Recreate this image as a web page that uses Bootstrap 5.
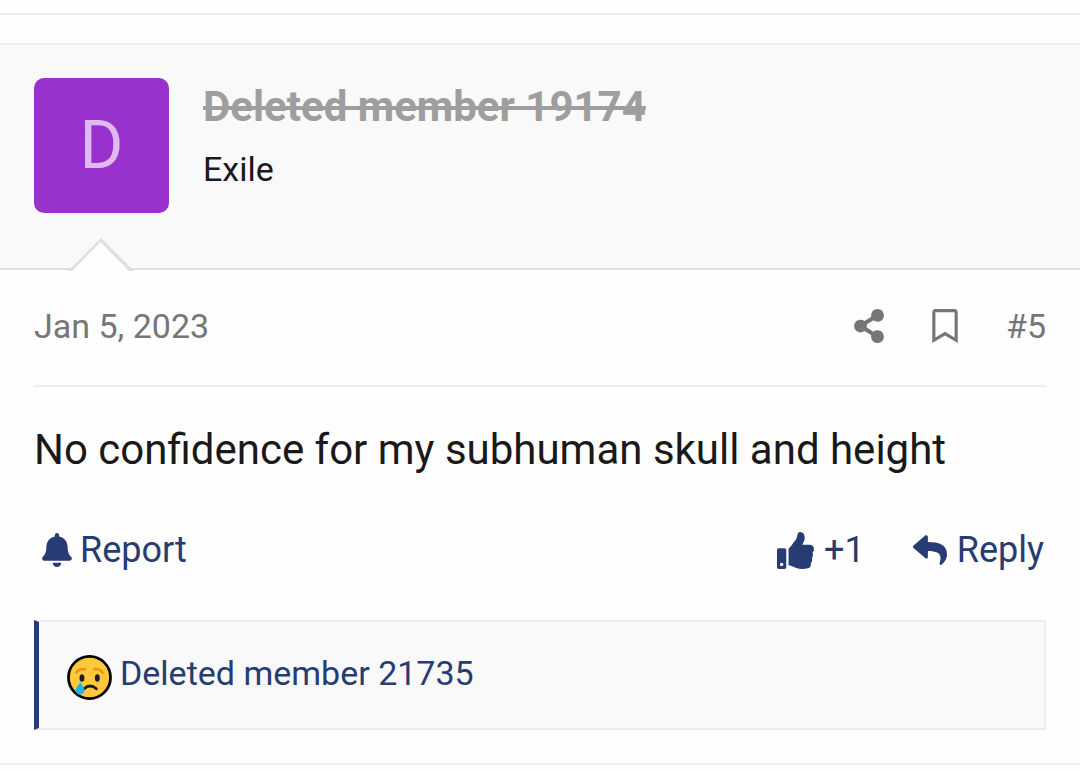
<!DOCTYPE html>
<html lang="en">
<head>
<meta charset="utf-8">
<meta name="viewport" content="width=device-width, initial-scale=1">
<title>Thread post #5</title>
<link href="https://cdn.jsdelivr.net/npm/bootstrap@5.3.0/dist/css/bootstrap.min.css" rel="stylesheet">
<style>
  body { font-family: Roboto, "Liberation Sans", sans-serif; font-size: 34px; line-height: 48px; color: #191919; background: #fefefe; }
  a { text-decoration: none; }
  svg { display: block; fill: currentColor; flex: none; }
  .prev-post { height: 15px; border-bottom: 2px solid #ededed; margin-bottom: 28px; }
  .post { border-top: 2px solid #ededed; border-bottom: 2px solid #ededed; }
  .post-user { position: relative; background: #f9f9f9; border-bottom: 2px solid #dfdfdf; padding: 33px 34px 55px; gap: 34px; }
  .avatar { width: 135px; height: 135px; border-radius: 10px; background: #9932cc; color: #e0b8f2; font-size: 67px; line-height: 1; }
  .user-arrow { position: absolute; left: 68px; bottom: -3px; }
  .user-name { font-size: 42px; line-height: 58px; font-weight: 700; color: #9e9e9e; text-decoration: line-through; }
  .user-title { margin-top: 9px; }
  .post-main { padding: 0 34px 33px; }
  .post-meta { height: 117px; padding-bottom: 4px; border-bottom: 2px solid #ededed; color: #767676; gap: 48px; }
  .post-meta a { color: inherit; }
  .post-text { font-size: 42px; line-height: 60px; margin: 33px 0 40px; }
  .post-actions { font-size: 36px; line-height: 60px; margin-bottom: 40px; padding: 0 2px 0 8px; }
  .post-actions a, .reactions a { color: #263c72; }
  .action { gap: 10px; }
  .reactions { background: #f9f9f9; border: 2px solid #ededed; border-left: 5px solid #263c72; padding: 27px 28px 28px; gap: 8px; }
  .reaction-icon { margin-top: 6px; }
</style>
</head>
<body>
<div class="prev-post"></div>
<article class="post">
  <header class="post-user d-flex">
    <a href="#" class="avatar d-flex align-items-center justify-content-center flex-shrink-0">D</a>
    <div>
      <a href="#" class="user-name d-block">Deleted member 19174</a>
      <div class="user-title">Exile</div>
    </div>
    <svg class="user-arrow" width="66" height="33" viewBox="0 0 66 33"><path fill="#dfdfdf" d="M0 33 33 0 66 33z"/><path fill="#fefefe" d="M4 33 32.500 4 61 33z"/></svg>
  </header>
  <div class="post-main">
    <div class="post-meta d-flex align-items-center">
      <a href="#" class="me-auto">Jan 5, 2023</a>
      <a href="#" aria-label="Share"><svg width="30" height="34" viewBox="0 0 448 512"><path d="M352 320c-22.608 0-43.387 7.819-59.79 20.895l-102.486-64.054a96.551 96.551 0 0 0 0-41.683l102.486-64.054C308.613 184.181 329.392 192 352 192c53.019 0 96-42.981 96-96S405.019 0 352 0s-96 42.981-96 96c0 7.158.79 14.13 2.276 20.841L155.79 180.895C139.387 167.819 118.608 160 96 160c-53.019 0-96 42.981-96 96s42.981 96 96 96c22.608 0 43.387-7.819 59.79-20.895l102.486 64.054A96.301 96.301 0 0 0 256 416c0 53.019 42.981 96 96 96s96-42.981 96-96-42.981-96-96-96z"/></svg></a>
      <a href="#" aria-label="Bookmark"><svg width="26" height="34" viewBox="0 0 384 512"><path d="M336 0H48C21.49 0 0 21.49 0 48v464l192-112 192 112V48c0-26.51-21.49-48-48-48zm0 428.43l-144-84-144 84V54a6 6 0 0 1 6-6h276c3.314 0 6 2.683 6 5.996V428.43z"/></svg></a>
      <a href="#">#5</a>
    </div>
    <p class="post-text">No confidence for my subhuman skull and height</p>
    <div class="post-actions d-flex align-items-center">
      <a href="#" class="d-flex align-items-center me-auto gap-2"><svg width="30" height="34" viewBox="0 0 448 512"><path d="M224 512c35.32 0 63.97-28.65 63.97-64H160.03c0 35.35 28.65 64 63.97 64zm215.39-149.71c-19.32-20.76-55.47-51.99-55.47-154.29 0-77.7-54.48-139.9-127.94-155.16V32c0-17.67-14.32-32-31.98-32s-31.98 14.33-31.98 32v20.84C118.56 68.1 64.08 130.3 64.08 208c0 102.3-36.15 133.53-55.47 154.29-6 6.45-8.66 14.16-8.61 21.71.11 16.4 12.98 32 32.1 32h383.8c19.12 0 32-15.6 32.1-32 .05-7.55-2.61-15.27-8.61-21.71z"/></svg>Report</a>
      <a href="#" class="action d-flex align-items-center me-5"><svg width="37" height="37" viewBox="0 0 512 512"><path d="M104 224H24c-13.255 0-24 10.745-24 24v240c0 13.255 10.745 24 24 24h80c13.255 0 24-10.745 24-24V248c0-13.255-10.745-24-24-24zM64 472c-13.255 0-24-10.745-24-24s10.745-24 24-24 24 10.745 24 24-10.745 24-24 24zM384 81.452c0 42.416-25.97 66.208-33.277 94.548h101.723c33.397 0 59.397 27.746 59.553 58.098.084 17.938-7.546 37.249-19.439 49.197l-.11.11c9.836 23.337 8.237 56.037-9.308 79.469 8.681 25.895-.069 57.704-16.382 74.757 4.298 17.598 2.244 32.575-6.148 44.632C440.202 511.587 389.616 512 346.839 512l-2.845-.001c-48.287-.017-87.806-17.598-119.56-31.725-15.957-7.099-36.821-15.887-52.651-16.178-6.54-.12-11.783-5.457-11.783-11.998v-213.77c0-3.2 1.282-6.271 3.558-8.521 39.614-39.144 56.648-80.587 89.117-113.111 14.804-14.832 20.188-37.236 25.393-58.902C282.515 39.293 291.817 0 312 0c24 0 72 8 72 81.452z"/></svg>+1</a>
      <a href="#" class="action d-flex align-items-center"><svg width="34" height="34" viewBox="0 0 512 512"><path d="M8.309 189.836L184.313 37.851C199.719 24.546 224 35.347 224 56.015v80.053c160.629 1.839 288 34.032 288 186.258 0 61.441-39.581 122.309-83.333 154.132-13.653 9.931-33.111-2.533-28.077-18.631 45.344-145.012-21.507-183.51-176.59-185.742V360c0 20.7-24.3 31.453-39.687 18.164l-176.004-152c-11.071-9.562-11.086-26.753 0-36.328z"/></svg>Reply</a>
    </div>
    <div class="reactions d-flex align-items-start">
      <svg class="reaction-icon" role="img" aria-label="Sad" width="45" height="45" viewBox="0 0 46 46"><circle cx="23" cy="23" r="21.5" fill="#ffc83d" stroke="#000" stroke-width="2.800"/><g fill="none" stroke-linecap="round"><path stroke="#e19b12" stroke-width="2.600" d="M9.500 18Q12.500 13.500 18.500 14.500M27.500 14.500Q33.500 13.500 36.500 18"/><path stroke="#1d1d1b" stroke-width="2.900" d="M17.500 34.500Q23.500 29 30 34.500"/></g><ellipse cx="15.300" cy="23.500" rx="2.500" ry="3.800" fill="#1d1d1b"/><ellipse cx="31" cy="23.500" rx="2.500" ry="3.800" fill="#1d1d1b"/><path fill="#1cb5e0" d="M13.500 27.500C15.500 32 17.800 33 17.800 36a4.500 4.500 0 0 1-9 0C9 33 12.500 31 13.500 27.500z"/></svg>
      <a href="#">Deleted member 21735</a>
    </div>
  </div>
</article>
<script src="https://cdn.jsdelivr.net/npm/bootstrap@5.3.0/dist/js/bootstrap.bundle.min.js"></script>
</body>
</html>
